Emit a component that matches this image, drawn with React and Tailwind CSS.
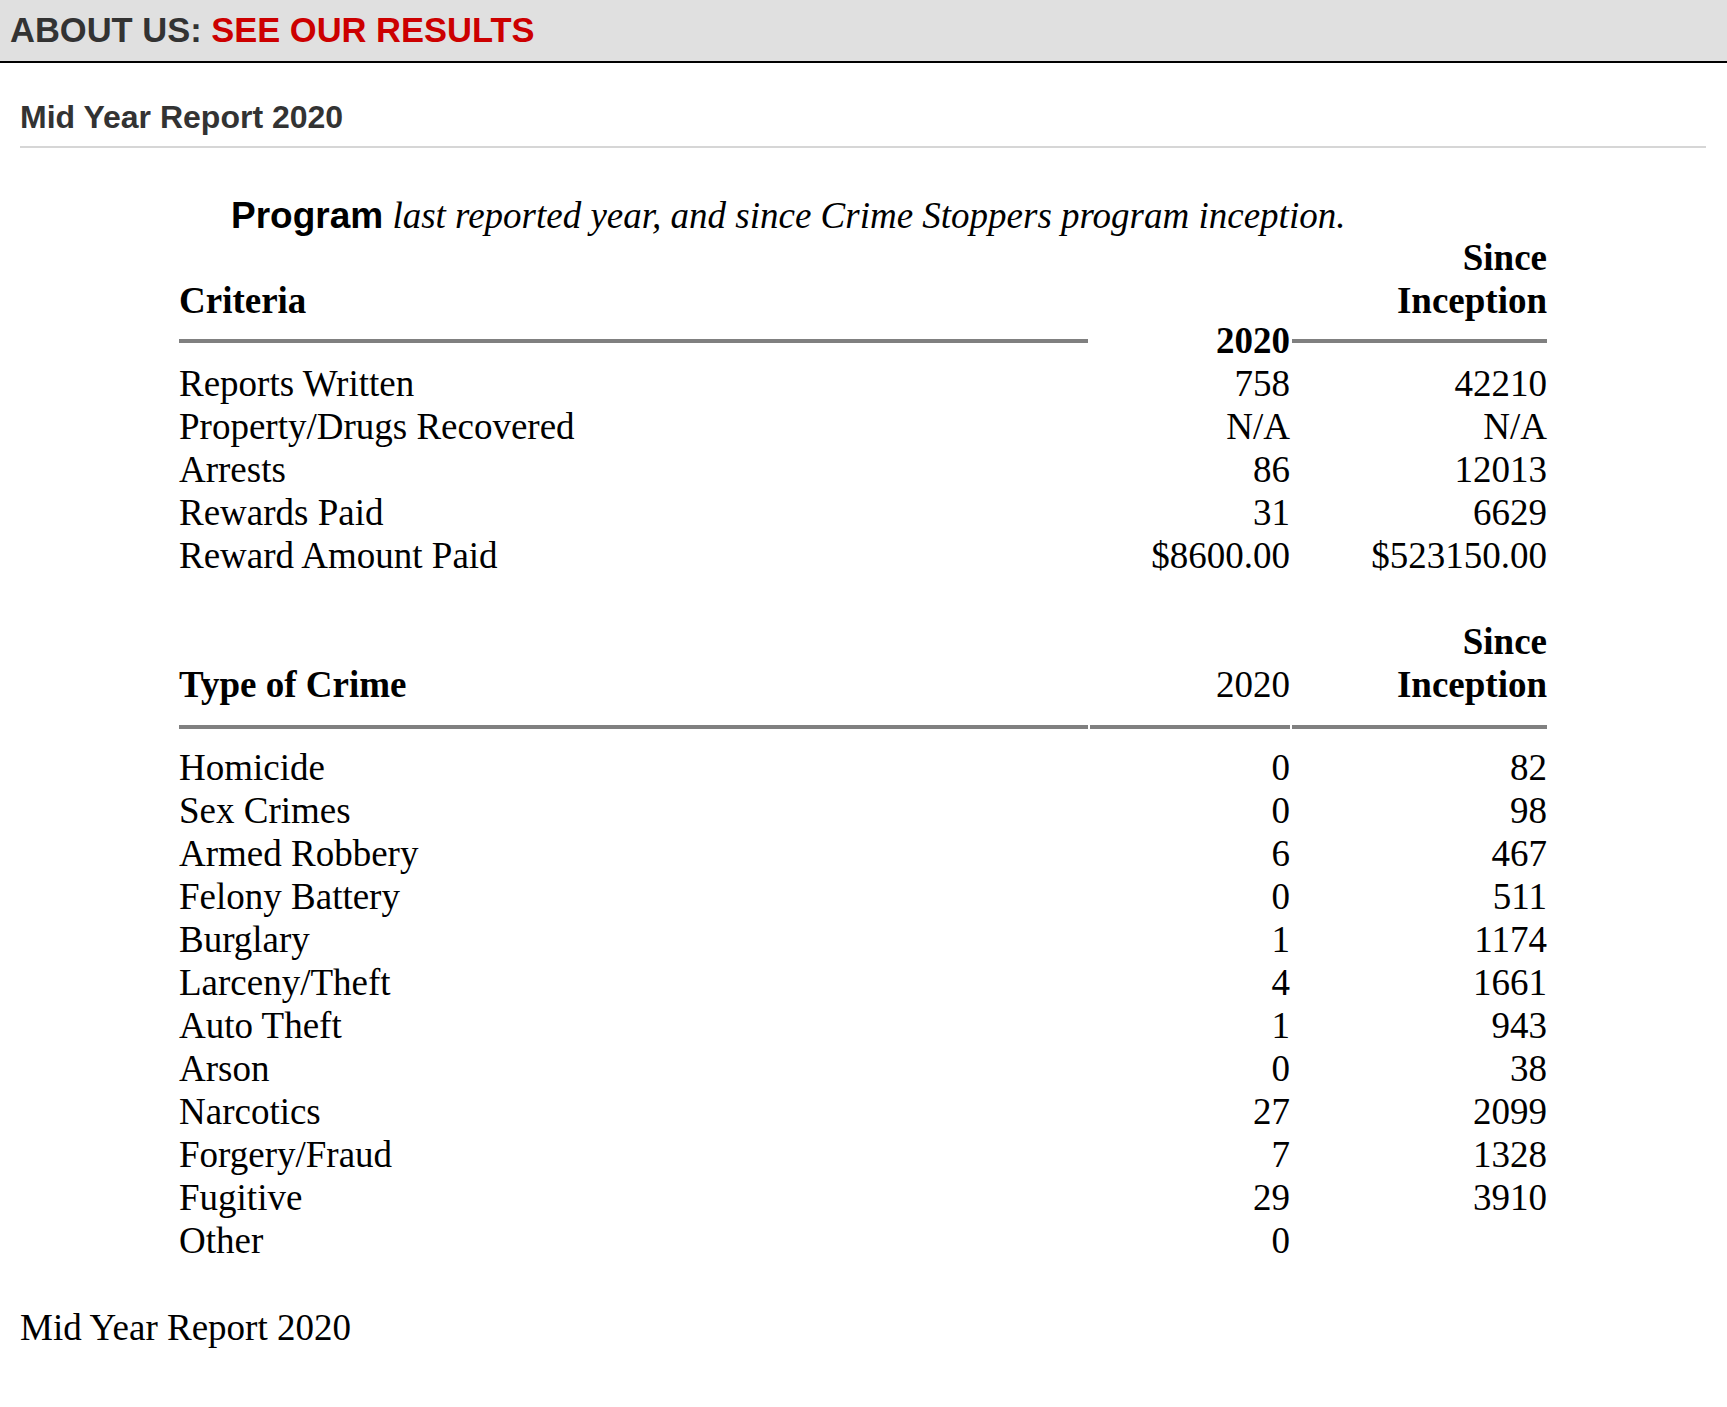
import React from "react";

const serif = "font-['Liberation_Serif','Times_New_Roman',serif]";
const sans = "font-['Liberation_Sans',Arial,sans-serif]";

const criteria = [
  ["Reports Written", "758", "42210"],
  ["Property/Drugs Recovered", "N/A", "N/A"],
  ["Arrests", "86", "12013"],
  ["Rewards Paid", "31", "6629"],
  ["Reward Amount Paid", "$8600.00", "$523150.00"],
];

const crimes = [
  ["Homicide", "0", "82"],
  ["Sex Crimes", "0", "98"],
  ["Armed Robbery", "6", "467"],
  ["Felony Battery", "0", "511"],
  ["Burglary", "1", "1174"],
  ["Larceny/Theft", "4", "1661"],
  ["Auto Theft", "1", "943"],
  ["Arson", "0", "38"],
  ["Narcotics", "27", "2099"],
  ["Forgery/Fraud", "7", "1328"],
  ["Fugitive", "29", "3910"],
  ["Other", "0", ""],
];

function Rows({ rows, className }) {
  return (
    <div className={`grid grid-cols-[909px_200px_255px] gap-x-[2px] text-[37px] leading-[43px] text-black ${className}`}>
      {rows.map(([a, b, c]) => (
        <React.Fragment key={a}>
          <div>{a}</div>
          <div className="text-right">{b}</div>
          <div className="text-right">{c}</div>
        </React.Fragment>
      ))}
    </div>
  );
}

export default function App() {
  return (
    <div className={`min-h-[1407px] bg-white ${serif}`}>
      <div className="h-[63px] bg-[#e0e0e0] border-b-2 border-black flex items-center pl-[10px]">
        <h1 className={`${sans} text-[34.5px] font-bold text-[#333333] leading-normal`}>
          ABOUT US: <span className="text-[#cc0000]">SEE OUR RESULTS</span>
        </h1>
      </div>

      <div className="pl-[20px] pr-[21px]">
        <div className="pt-[36px] pb-[10px] border-b-2 border-[#d6d6d6]">
          <h2 className={`${sans} text-[32px] font-bold text-[#333333] leading-[37px]`}>Mid Year Report 2020</h2>
        </div>

        <p className="mt-[47px] ml-[211px] text-[37px] leading-[41px] text-black">
          <span className={`${sans} font-bold`}>Program</span>{" "}
          <em className="italic">last reported year, and since Crime Stoppers program inception.</em>
        </p>

        <div className="ml-[159px]">
          <div className="grid grid-cols-[909px_200px_255px] gap-x-[2px] items-end text-[37px] leading-[43px] font-bold text-black">
            <div className="pb-[17px] border-b-4 border-[#808080]">Criteria</div>
            <div className="text-right mb-[-19px]">2020</div>
            <div className="text-right pb-[17px] border-b-4 border-[#808080]">
              Since
              <br />
              Inception
            </div>
          </div>
          <Rows rows={criteria} className="mt-[19px]" />

          <div className="mt-[43px] grid grid-cols-[909px_200px_255px] gap-x-[2px] items-end text-[37px] leading-[43px] text-black">
            <div className="font-bold pb-[19px] border-b-4 border-[#808080]">Type of Crime</div>
            <div className="text-right pb-[19px] border-b-4 border-[#808080]">2020</div>
            <div className="font-bold text-right pb-[19px] border-b-4 border-[#808080]">
              Since
              <br />
              Inception
            </div>
          </div>
          <Rows rows={crimes} className="mt-[17px]" />
        </div>

        <p className="mt-[44px] text-[37px] leading-[43px] text-black">Mid Year Report 2020</p>
      </div>
    </div>
  );
}
